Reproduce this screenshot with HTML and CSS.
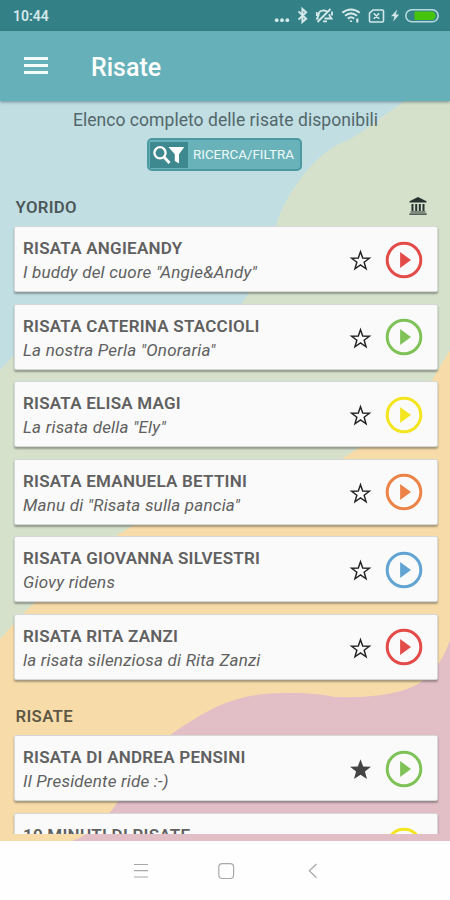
FILE: index.html
```html
<!DOCTYPE html>
<html lang="it">
<head>
<meta charset="utf-8">
<title>Risate</title>
<link rel="stylesheet" href="styles.css">
</head>
<body>
<svg class="defs" aria-hidden="true">
  <symbol id="star" viewBox="0 0 24 24"><path d="M12 2.9 14.3 9.4 21.3 9.6 15.8 13.8 17.8 20.6 12 16.6 6.2 20.6 8.2 13.8 2.7 9.6 9.7 9.4Z" fill="none" stroke="#222" stroke-width="1.5"/></symbol>
  <symbol id="star-full" viewBox="0 0 24 24"><path d="M12 1.4 14.8 8.8 22.9 9.1 16.6 14 18.8 22 12 17.5 5.2 22 7.4 14 1.1 9.1 9.2 8.8Z" fill="#444"/></symbol>
  <symbol id="play" viewBox="0 0 38 38"><circle cx="19" cy="19" r="16.8" fill="none" stroke="currentColor" stroke-width="3"/><path d="M15.1 11 26 19 15.1 27Z" fill="currentColor"/></symbol>
</svg>
<div class="phone">
  <header class="status">
    <span class="time">10:44</span>
    <svg class="status-icons" width="170" height="31" viewBox="0 0 170 31">
      <g fill="#d4e8ea"><circle cx="2.700" cy="20.200" r="1.900"/><circle cx="8" cy="20.200" r="1.900"/><circle cx="13.300" cy="20.200" r="1.900"/></g>
      <g fill="none" stroke="#d4e8ea" stroke-width="2">
        <path d="m24.500 11.400 7.600 7.400-3.700 3.200V9l3.700 3.200-7.600 7.400"/>
        <path d="M44.500 18.500H43L44.500 15.500C44.500 12 47 10.300 50 10.300l3 1M55.500 14v1.800l2 2.700H50.500M49 21.300h4M43.500 22 56.500 9M42.800 12v4M58 11.500v4" stroke-width="1.800"/>
        <path d="M68.300 12.800c5.200-4.400 12.200-4.400 17.400 0M71 15.800c3.700-3 8.300-3 12 0M73.800 18.600c2-1.600 4.400-1.600 6.400 0" stroke-width="2"/>
        <path d="M77 22v-1.600M83.300 18.500v4" stroke-width="2.200"/>
        <path d="M99 10h9.500q1 0 1 1v10q0 1-1 1H96.500q-1 0-1-1v-7.800ZM99.700 13.300l5.500 5.400m0-5.400-5.500 5.400" stroke-width="1.600"/>
      </g>
      <path d="m123.300 9.600-6.200 6.700h3.300l-1.200 5.300 6-7.200h-3.500Z" fill="#d4e8ea"/>
      <rect x="131.800" y="9.700" width="32.400" height="12" rx="6" fill="none" stroke="#b5dbe0" stroke-width="1.600"/>
      <path d="M140.500 11.500h17a4.200 4.200 0 0 1 0 8.400h-17Z" fill="#45c40b"/>
    </svg>
  </header>
  <div class="appbar">
    <span class="menu"><i></i><i></i><i></i></span>
    <h1>Risate</h1>
  </div>
  <main class="content">
    <svg class="backdrop" viewBox="0 101 450 740" preserveAspectRatio="none" aria-hidden="true">
      <path fill="#e2bec7" d="M0 101H450V841H0Z"/>
      <path fill="#f7dca9" d="M0 101H450V640C445 655 437 670 420 683C400 694 375 698 335 697C325 695 315 693 285 693C240 693 215 704 173 733C140 755 128 782 117 803C106 819 92 834 72 841H0Z"/>
      <path fill="#d5e1cb" d="M0 101H450V350L432 380C410 420 375 437 345 457C275 503 170 496 118 535C70 562 58 583 30 607C18 618 9 630 0 639Z"/>
      <path fill="#c1dee3" d="M0 101H405C375 120 364 134 341 143C309 158 284 199 276 225C260 260 258 280 243 302C190 370 75 300 11 358L0 370Z"/>
    </svg>
    <div class="intro">
      <p>Elenco completo delle risate disponibili</p>
      <button class="filter">
        <svg width="39" height="26" viewBox="0 0 39 26"><path fill="#3d898f" d="M1 0H39V26H1Z"/><circle cx="11" cy="10.800" r="5.600" fill="none" stroke="#fff" stroke-width="2.300"/><path d="m15 15 5.500 6" stroke="#fff" stroke-width="2.800"/><path d="M19.500 5H35.300L30 12.300V21.500L25.800 19V12.300Z" fill="#fff"/></svg>
        <span>RICERCA/FILTRA</span>
      </button>
    </div>
    <div class="section first"><h2>YORIDO</h2>
      <svg width="18" height="18" viewBox="0 0 18 18" fill="#263331"><path d="M9 0 17.500 4.200V5.600H.5V4.200ZM2.500 7h2v7h-2ZM6.200 7h2v7h-2ZM9.800 7h2v7h-2ZM13.500 7h2v7h-2ZM1.500 14.600h15v1h-15ZM.3 16.500h17.400v1.300H.3Z"/></svg>
    </div>
    <div class="list">
      <article class="card"><div class="words"><h3>RISATA ANGIEANDY</h3><p>I buddy del cuore "Angie&amp;Andy"</p></div><svg class="star"><use href="#star"/></svg><svg class="play red"><use href="#play"/></svg></article>
      <article class="card"><div class="words"><h3>RISATA CATERINA STACCIOLI</h3><p>La nostra Perla "Onoraria"</p></div><svg class="star"><use href="#star"/></svg><svg class="play green"><use href="#play"/></svg></article>
      <article class="card"><div class="words"><h3>RISATA ELISA MAGI</h3><p>La risata della "Ely"</p></div><svg class="star"><use href="#star"/></svg><svg class="play yellow"><use href="#play"/></svg></article>
      <article class="card"><div class="words"><h3>RISATA EMANUELA BETTINI</h3><p>Manu di "Risata sulla pancia"</p></div><svg class="star"><use href="#star"/></svg><svg class="play orange"><use href="#play"/></svg></article>
      <article class="card"><div class="words"><h3>RISATA GIOVANNA SILVESTRI</h3><p>Giovy ridens</p></div><svg class="star"><use href="#star"/></svg><svg class="play blue"><use href="#play"/></svg></article>
      <article class="card"><div class="words"><h3>RISATA RITA ZANZI</h3><p>la risata silenziosa di Rita Zanzi</p></div><svg class="star"><use href="#star"/></svg><svg class="play red"><use href="#play"/></svg></article>
    </div>
    <div class="section second"><h2>RISATE</h2></div>
    <div class="list last">
      <article class="card"><div class="words"><h3>RISATA DI ANDREA PENSINI</h3><p>Il Presidente ride :-)</p></div><svg class="star"><use href="#star-full"/></svg><svg class="play green"><use href="#play"/></svg></article>
      <article class="card"><div class="words"><h3>10 MINUTI DI RISATE</h3></div><svg class="play yellow"><use href="#play"/></svg></article>
    </div>
  </main>
  <nav class="nav">
    <svg width="450" height="59" viewBox="0 0 450 59" fill="none" stroke="#a8a8a8" stroke-width="1.200"><path d="M134 23.500h14M134 29.700h14M134 36h14"/><rect x="218.800" y="22.700" width="14.800" height="14.800" rx="3.500"/><path d="m316.500 23-7.200 6.800 7.200 6.900"/></svg>
  </nav>
</div>
</body>
</html>
```
FILE: styles.css
```css
* { box-sizing: border-box; }
body { margin: 0; font-family: Roboto, "Liberation Sans", sans-serif; }
h1, h2, h3, p { margin: 0; }
.defs { position: absolute; width: 0; height: 0; }
.phone { width: 450px; height: 900px; display: flex; flex-direction: column; overflow: hidden; background: #fff; }
.status { height: 31px; flex: none; background: #338086; display: flex; align-items: center; justify-content: space-between; padding: 0 6px 0 13px; }
.time { color: #d4e8ea; font-size: 14px; font-weight: 600; letter-spacing: 0; line-height: 31px; padding-top: 1px; }
.appbar { height: 70px; flex: none; background: #66b1b9; display: flex; align-items: center; padding-left: 24px; gap: 43px; box-shadow: 0 1px 3px rgba(40,70,80,.55); z-index: 1; }
.menu { display: flex; flex-direction: column; gap: 4.500px; width: 24px; padding-bottom: 1px; }
.menu i { height: 2.600px; background: #f4fbfb; }
h1 { color: #fff; font-size: 25px; font-weight: 550; line-height: 30px; padding-top: 4px; }
.content { position: relative; height: 739.500px; flex: none; padding: 0 12.500px 0 13.500px; overflow: hidden; display: flex; flex-direction: column; }
.backdrop { position: absolute; left: 0; top: 0; width: 450px; height: 740px; }
.intro, .section, .list { position: relative; }
.intro { height: 84px; flex: none; display: flex; flex-direction: column; align-items: center; color: #53676a; font-size: 17.500px; line-height: 20px; padding-top: 9px; letter-spacing: .05px; }
.filter { display: flex; align-items: center; gap: 5px; width: 155px; height: 33px; margin: 8px 2px 0 0; padding: 0; border: 2px solid #4c9aa1; border-radius: 5px; background: #6ab2b9; color: #eefafa; font: 400 13.400px Roboto, sans-serif; white-space: nowrap; }
.filter svg { flex: none; }
.section { height: 55.500px; flex: none; display: flex; align-items: center; justify-content: space-between; padding: 1px 10.500px 0 2px; }
.section.first { height: 41px; }
.section.first h2 { padding-top: 2px; }
.section.second { padding-top: 17px; }
h2 { font-size: 16.800px; font-weight: 600; color: rgba(30,35,30,.72); letter-spacing: .3px; }
.list { display: flex; flex-direction: column; gap: 11.500px; }
.list.last { height: 99.500px; overflow: hidden; margin: -1px -4px 0; padding: 1px 4px 0; }
.card { height: 66px; flex: none; display: flex; align-items: flex-start; background: #fafafa; border: 1px solid #d4d8d6; border-radius: 2px; box-shadow: 0 2px 2px rgba(50,50,50,.4); padding: 10px 14px 0 8.500px; }
.words { flex: 1; color: #606060; white-space: nowrap; }
h3 { font-size: 17px; font-weight: 600; line-height: 22px; letter-spacing: .24px; }
.words p { font-size: 17px; font-weight: 400; font-style: italic; line-height: 26px; letter-spacing: .2px; }
.star { width: 23px; height: 23px; margin: 12px 13px 0 0; }
.play { width: 38px; height: 38px; margin-top: 3.500px; }
.red { color: #e34b49; }
.green { color: #7fc257; }
.yellow { color: #f3e51f; }
.orange { color: #ec8347; }
.blue { color: #61a4d3; }
.nav { flex: 1; background: #fefefe; }
.nav svg { display: block; }
```
